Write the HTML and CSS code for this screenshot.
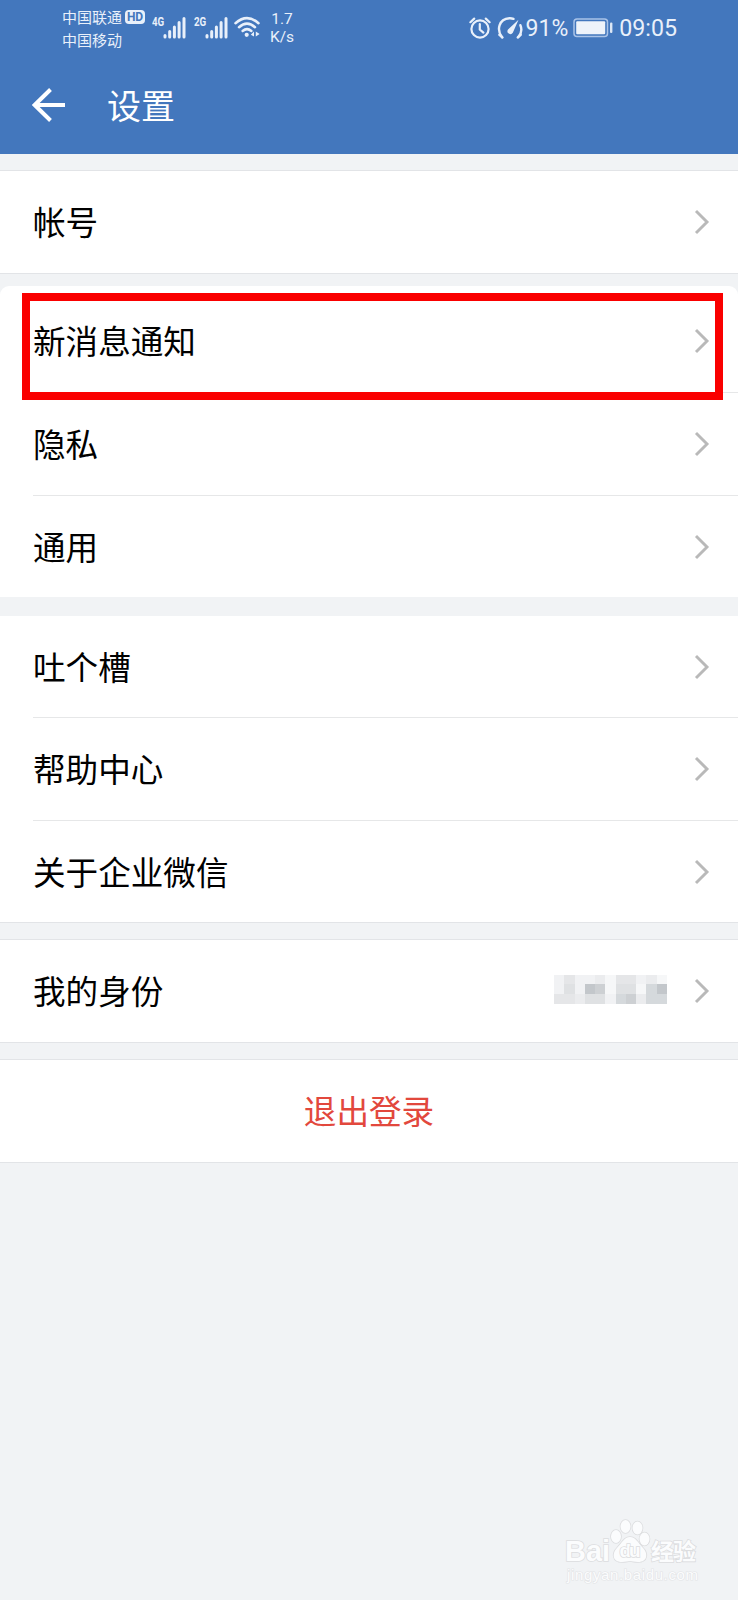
FILE: index.html
```html
<!doctype html>
<html lang="zh-CN">
    <head>
        <meta charset="UTF-8" />
        <meta name="viewport" content="width=device-width, initial-scale=1.0" />
        <title>设置</title>
        <link rel="stylesheet" href="styles.css">
    </head>
    <body>
        <svg class="sprite" width="0" height="0">
            <symbol id="chevron" viewBox="0 0 16 26">
                <path d="M2 2 L13 13 L2 24" fill="none" stroke="#b9b9b9" stroke-width="2.9" />
            </symbol>
            <symbol id="signal" viewBox="0 0 24 22">
                <path d="M2 18.5V20M6.7 14.5V20M11.4 10V20M16.1 5.5V20M21 1.5V20" fill="none" stroke="#e9f0fa" stroke-width="3" stroke-linecap="round" />
            </symbol>
        </svg>
        <header class="header">
            <div class="statusBar">
                <div class="carriers">
                    <div class="carrier">中国联通<span class="hd">HD</span></div>
                    <div class="carrier">中国移动</div>
                </div>
                <div class="network">
                    <span class="netType">4G</span>
                    <svg class="signal"><use href="#signal" /></svg>
                </div>
                <div class="network">
                    <span class="netType">2G</span>
                    <svg class="signal"><use href="#signal" /></svg>
                </div>
                <svg class="wifi" viewBox="0 0 26 22">
                    <g fill="none" stroke="#e9f0fa" stroke-width="2.5" stroke-linecap="round">
                        <path d="M1.5 7.2 Q13 -3 24.5 7.2" />
                        <path d="M5 11.2 Q13 4 21 11.2" />
                        <path d="M8.6 15 Q13 11.2 17.4 15" />
                    </g>
                    <circle cx="12.7" cy="18.8" r="2.1" fill="#e9f0fa" />
                    <path d="M20 15.5V20.5L16.8 18.7ZM21.8 15.5L25.6 18L21.8 20.5Z" fill="#e9f0fa" />
                </svg>
                <div class="speed">1.7<br>K/s</div>
                <div class="statusRight">
                    <svg class="alarm" viewBox="0 0 22 22">
                        <g fill="none" stroke="#e9f0fa" stroke-width="2.2">
                            <circle cx="11" cy="12" r="8.6" />
                            <path d="M10.8 7V12.5L14.4 15.6M1.4 5.2L5.2 1.6M20.6 5.2L16.8 1.6" stroke-linecap="round" />
                        </g>
                    </svg>
                    <svg class="gauge" viewBox="0 0 26 24">
                        <g fill="none" stroke="#e9f0fa" stroke-width="2.4" stroke-linecap="round">
                            <path d="M5 21.2C-0.5 14 1.5 3 12.5 2.2C14 2.1 15 2.3 16.5 2.8" />
                            <path d="M23.4 9.2C25.2 13.5 24.2 17.8 21.2 21.2" />
                            <path d="M2.4 18.8L5.4 21.4M23.7 18.8L20.8 21.4" />
                        </g>
                        <path d="M21.5 3.8L15.8 16.8A2.8 2.8 0 1 1 11 13.6Z" fill="#e9f0fa" />
                    </svg>
                    <span class="percent">91%</span>
                    <svg class="battery" viewBox="0 0 40 20">
                        <rect x="1" y="1" width="33.5" height="17.5" rx="3" fill="none" stroke="#a9c3e8" stroke-width="1.5" />
                        <rect x="3.2" y="3.2" width="29" height="13" rx="1" fill="#eef3fa" />
                        <rect x="37" y="4.5" width="2.4" height="10.5" rx="1" fill="#dbe6f5" />
                    </svg>
                    <span class="clock">09:05</span>
                </div>
            </div>
            <div class="titleBar">
                <svg class="back" viewBox="0 0 34 34">
                    <path d="M18.5 1.5L2.7 17L18.5 32.5M3 17H33" fill="none" stroke="#fff" stroke-width="4" />
                </svg>
                <h1 class="title">设置</h1>
            </div>
        </header>

        <main class="settings">
            <section class="group">
                <div class="row">帐号<svg class="chevron"><use href="#chevron" /></svg></div>
            </section>
            <section class="group messages">
                <div class="row">新消息通知<svg class="chevron"><use href="#chevron" /></svg></div>
                <div class="row">隐私<svg class="chevron"><use href="#chevron" /></svg></div>
                <div class="row">通用<svg class="chevron"><use href="#chevron" /></svg></div>
                <div class="highlight"></div>
            </section>
            <section class="group help">
                <div class="row">吐个槽<svg class="chevron"><use href="#chevron" /></svg></div>
                <div class="row">帮助中心<svg class="chevron"><use href="#chevron" /></svg></div>
                <div class="row">关于企业微信<svg class="chevron"><use href="#chevron" /></svg></div>
            </section>
            <section class="group">
                <div class="row">
                    我的身份
                    <div class="mosaic">
                        <i class="c1"></i><i class="c3"></i><i class="c1"></i><i class="c1"></i><i class="c2"></i><i class="c0"></i><i class="c3"></i><i class="c3"></i><i class="c1"></i><i class="c2"></i><i class="c0"></i>
                        <i class="c1"></i><i class="c4"></i><i class="c1"></i><i class="c7"></i><i class="c6"></i><i class="c0"></i><i class="c4"></i><i class="c4"></i><i class="c0"></i><i class="c5"></i><i class="c7"></i>
                        <i class="c3"></i><i class="c3"></i><i class="c2"></i><i class="c4"></i><i class="c4"></i><i class="c1"></i><i class="c5"></i><i class="c6"></i><i class="c2"></i><i class="c5"></i><i class="c5"></i>
                    </div>
                    <svg class="chevron"><use href="#chevron" /></svg>
                </div>
            </section>
            <section class="group">
                <div class="row logout">退出登录</div>
            </section>
        </main>

        <svg class="watermark" viewBox="0 0 150 70">
            <text class="wmUrl" x="17" y="64.5" textLength="131">jingyan.baidu.com</text>
            <g class="wmShapes">
                <text class="wmLogo" x="15" y="45.5" textLength="45" lengthAdjust="spacingAndGlyphs">Bai</text>
                <ellipse cx="66" cy="21.5" rx="5" ry="6.5" />
                <ellipse cx="75.5" cy="11.5" rx="5" ry="6.5" />
                <ellipse cx="87.5" cy="13" rx="5" ry="6.5" />
                <ellipse cx="94.5" cy="24" rx="5" ry="6.5" />
                <path d="M80 22C86 22 88 28 93 33C98 38 98 47 88 47C84 47 82 46 80 46C78 46 76 47 72 47C62 47 62 38 67 33C72 28 74 22 80 22Z" />
                <text class="wmDu" x="69.5" y="42" textLength="21">du</text>
                <text class="wmName" x="101" y="45" textLength="45">经验</text>
            </g>
        </svg>
    </body>
</html>
```

FILE: styles.css
```css
* {
    box-sizing: border-box;
}
body {
    margin: 0;
    height: 1600px;
    position: relative;
    overflow: hidden;
    background: #f1f3f5;
    color: #000;
    font-family: Roboto, "Noto Sans CJK SC", sans-serif;
}
.sprite {
    position: absolute;
}
.header {
    height: 154px;
    background: #4377bd;
    color: #fff;
}
.statusBar {
    display: flex;
    height: 56px;
    padding: 0 61px 0 62px;
    color: #e9f0fa;
}
.carriers {
    width: 90px;
    padding-top: 5px;
}
.carrier {
    display: flex;
    align-items: center;
    height: 23px;
    font-size: 15px;
    white-space: nowrap;
}
.hd {
    width: 20px;
    height: 14px;
    margin-left: 3px;
    border-radius: 4px;
    background: #e9f0fa;
    color: #4377bd;
    font-size: 12px;
    font-weight: 700;
    line-height: 14px;
    text-align: center;
}
.network {
    display: flex;
    width: 42px;
}
.netType {
    width: 11px;
    margin-top: 15px;
    font-size: 13px;
    font-weight: 700;
    line-height: 13px;
    white-space: nowrap;
    transform: scaleX(0.75);
    transform-origin: left;
}
.signal {
    width: 24px;
    height: 22px;
    margin-top: 17px;
}
.wifi {
    width: 26px;
    height: 22px;
    margin: 16px 0 0 -2px;
}
.speed {
    margin: 10px 0 0 10px;
    font-size: 15.5px;
    line-height: 18px;
    text-align: center;
}
.statusRight {
    display: flex;
    align-items: center;
    height: 56px;
    margin-left: auto;
    font-size: 23.2px;
}
.alarm {
    width: 22px;
    height: 22px;
    margin-right: 6px;
}
.gauge {
    width: 26px;
    height: 24px;
    margin-right: 3px;
}
.percent {
    font-size: 23px;
}
.battery {
    width: 40px;
    height: 20px;
    margin: 0 6px 0 5px;
}
.titleBar {
    display: flex;
    align-items: center;
    height: 98px;
    padding: 0 32px;
}
.back {
    width: 34px;
    height: 34px;
    margin-bottom: 1px;
}
.title {
    margin: 4px 0 0 41px;
    font-size: 34px;
    font-weight: 400;
    line-height: 50px;
}
.settings {
    padding-top: 16px;
}
.group {
    position: relative;
    margin-bottom: 16px;
    border-top: 1px solid #e2e4e7;
    border-bottom: 1px solid #e2e4e7;
    background: #fff;
}
.row {
    display: flex;
    align-items: center;
    height: 102px;
    margin-left: 33px;
    padding: 0 28px 3px 0;
    font-size: 32.6px;
}
.row + .row {
    height: 103px;
    border-top: 1px solid #e6e7e8;
}
.row + .row + .row {
    height: 102px;
}
.messages {
    margin-top: -4px;
    margin-bottom: 19px;
    padding-top: 4px;
    border: none;
    border-radius: 9px 9px 0 0;
}
.help {
    border-top: none;
}
.help .row:first-child {
    height: 101px;
}
.chevron {
    width: 16px;
    height: 26px;
    margin-top: 3px;
    margin-left: auto;
}
.highlight {
    position: absolute;
    top: 7px;
    left: 22px;
    width: 701px;
    height: 107px;
    border: 8px solid #fa0000;
}
.mosaic {
    display: grid;
    grid-template-columns: repeat(11, 1fr);
    grid-template-rows: 9px 10px 10px;
    width: 113px;
    margin-left: auto;
}
.mosaic + .chevron {
    margin-left: 27px;
}
.c0 { background: #f6f7f8; }
.c1 { background: #f1f2f4; }
.c2 { background: #ebecee; }
.c3 { background: #e5e6e8; }
.c4 { background: #dfe1e3; }
.c5 { background: #d5d9dc; }
.c6 { background: #cdd0d3; }
.c7 { background: #c3c7cb; }
.logout {
    justify-content: center;
    margin-left: 0;
    padding-right: 0;
    color: #e2483d;
}
.watermark {
    position: absolute;
    right: 38px;
    bottom: 15px;
    width: 150px;
    height: 70px;
}
.wmShapes {
    fill: #fbfcfd;
    stroke: #dcdddf;
    stroke-width: 1.6px;
    paint-order: stroke;
}
.wmLogo,
.wmDu {
    font-family: "Liberation Sans", sans-serif;
    font-weight: 700;
}
.wmLogo {
    font-size: 29px;
}
.wmDu {
    font-size: 19px;
}
.wmName {
    font-size: 23px;
    font-weight: 700;
}
.wmUrl {
    font-family: "Liberation Sans", sans-serif;
    font-size: 15px;
    fill: #fbfcfd;
    stroke: #e3e4e6;
    stroke-width: 1.2px;
    paint-order: stroke;
}
```
